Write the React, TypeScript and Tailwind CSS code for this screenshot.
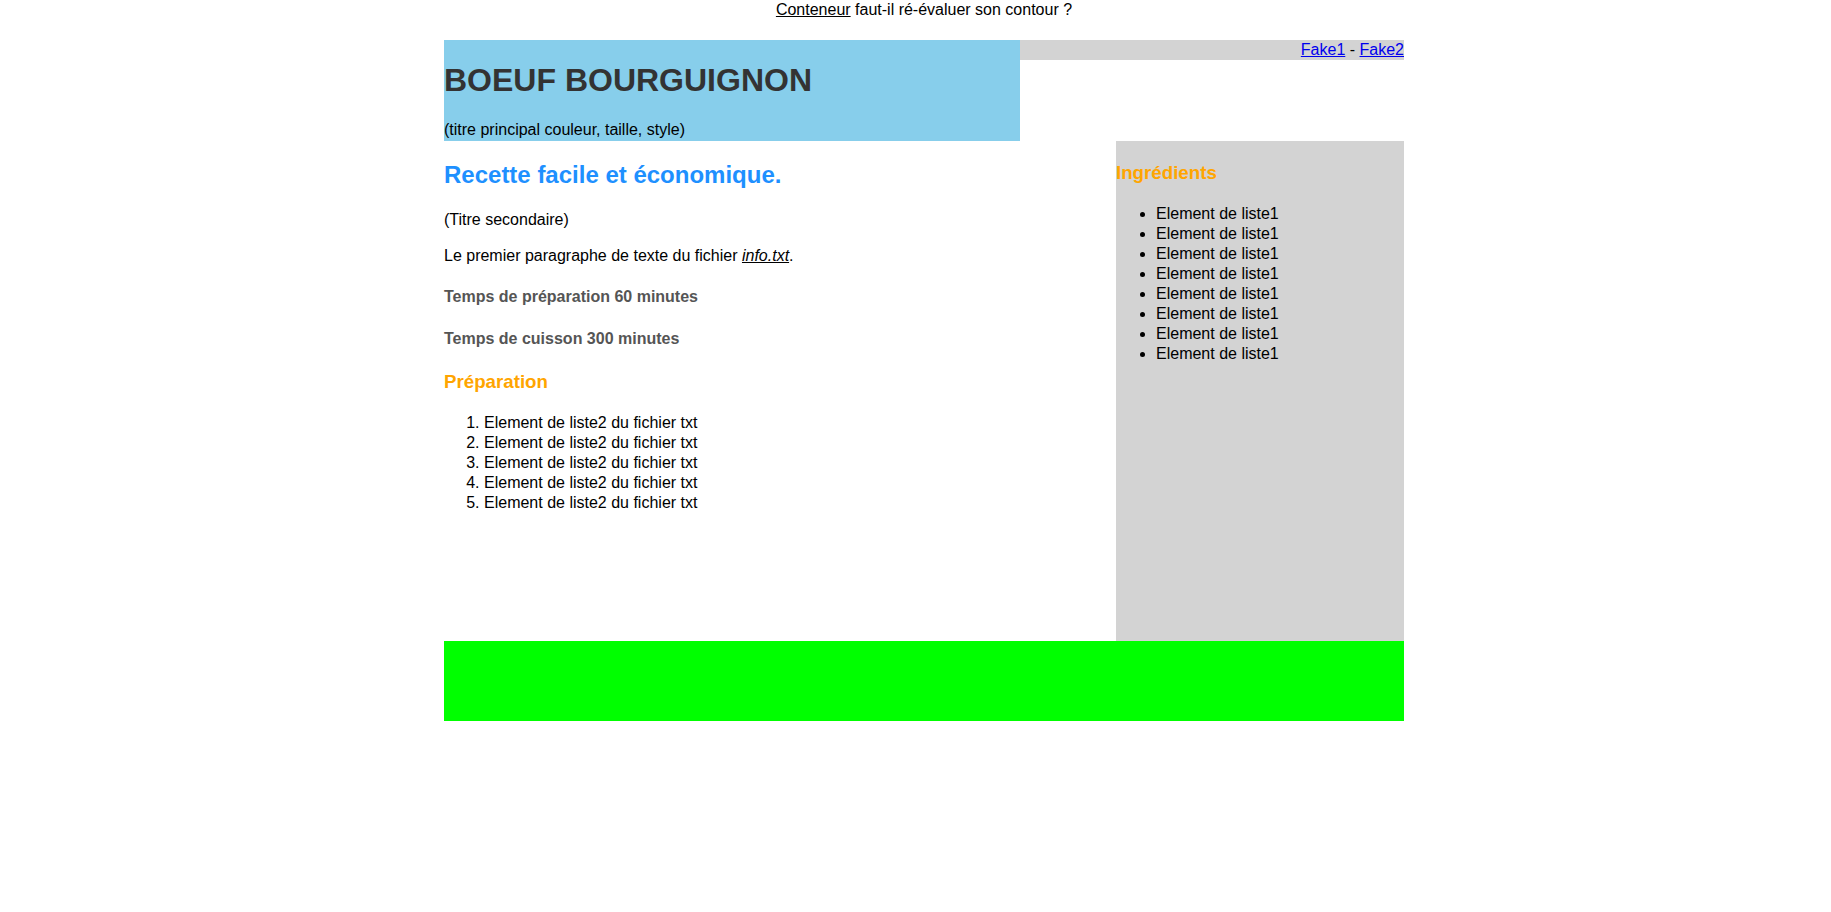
export default function App() {
  const ingredients = Array.from({ length: 8 }, () => "Element de liste1");
  const steps = Array.from({ length: 5 }, () => "Element de liste2 du fichier txt");
  return (
    <div
      className="min-h-[912px] bg-white text-black text-[16px] leading-[20px]"
      style={{ fontFamily: '"Liberation Sans", Arial, sans-serif' }}
    >
      <div className="ml-[444px] w-[960px]">
        <p className="text-center h-[20px] leading-[20px]">
          <u>Conteneur</u> faut-il ré-évaluer son contour ?
        </p>

        <div className="mt-[20px] flex items-start">
          <div className="w-[576px] h-[101px] bg-[#87CEEB] flex flex-col">
            <h1 className="mt-[22px] text-[32px] leading-[37px] font-bold text-[#333333]">
              BOEUF BOURGUIGNON
            </h1>
            <p className="mt-[21px] leading-[20px]">(titre principal couleur, taille, style)</p>
          </div>
          <nav className="w-[384px] h-[20px] bg-[#D3D3D3] text-right leading-[20px]">
            <a href="#" className="text-[#0000EE] underline">Fake1</a>
            {" - "}
            <a href="#" className="text-[#0000EE] underline">Fake2</a>
          </nav>
        </div>

        <div className="flex">
          <main className="flex-1 flex flex-col">
            <h2 className="mt-[19px] text-[24px] leading-[30px] font-bold text-[#1E90FF]">
              Recette facile et économique.
            </h2>
            <p className="mt-[20px]">(Titre secondaire)</p>
            <p className="mt-[16px]">
              Le premier paragraphe de texte du fichier <u><i>info.txt</i></u>.
            </p>
            <h4 className="mt-[21px] font-bold text-[#555555]">Temps de préparation 60 minutes</h4>
            <h4 className="mt-[22px] font-bold text-[#555555]">Temps de cuisson 300 minutes</h4>
            <h3 className="mt-[21px] text-[18.72px] leading-[23px] font-bold text-[#FFA500]">
              Préparation
            </h3>
            <ol className="mt-[20px] list-decimal pl-[40px]">
              {steps.map((s, i) => (
                <li key={i}>{s}</li>
              ))}
            </ol>
          </main>
          <aside className="w-[288px] h-[500px] bg-[#D3D3D3] flex flex-col">
            <h3 className="mt-[20px] text-[18.72px] leading-[23px] font-bold text-[#FFA500]">
              Ingrédients
            </h3>
            <ul className="mt-[20px] list-disc pl-[40px]">
              {ingredients.map((s, i) => (
                <li key={i}>{s}</li>
              ))}
            </ul>
          </aside>
        </div>

        <footer className="h-[80px] bg-[#00FF00]" />
      </div>
    </div>
  );
}
